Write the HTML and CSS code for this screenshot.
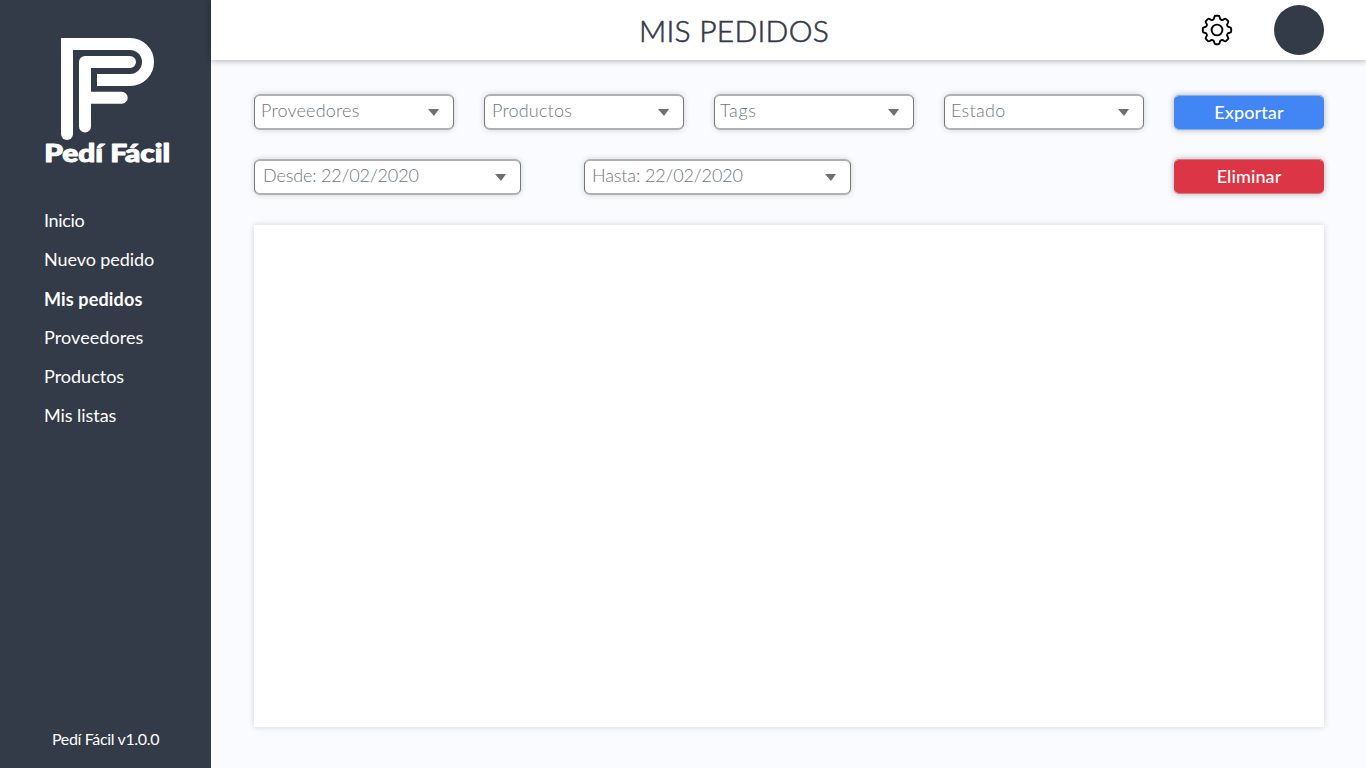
FILE: index.html
```html
<!DOCTYPE html>
<html lang="es">
<head>
<meta charset="utf-8">
<title>Pedí Fácil</title>
<link rel="stylesheet" href="styles.css">
</head>
<body>
<div class="app">
  <aside class="sidebar">
    <svg class="logo" width="130" height="134" viewBox="42 34 130 134">
      <g fill="none" stroke="#fff" stroke-width="12">
        <path d="M67 134V46" stroke-linecap="round"/>
        <path d="M67 56V44H130A18 18 0 0 1 130 80H97"/>
        <path d="M85 126.500V62H130M85 97.700H121.700" stroke-linecap="round" stroke-linejoin="round"/>
      </g>
      <text class="logo-text" x="44.200" y="162" textLength="126" lengthAdjust="spacingAndGlyphs">Pedí Fácil</text>
    </svg>
    <nav class="menu">
      <a class="m1">Inicio</a>
      <a class="m2">Nuevo pedido</a>
      <a class="m3 active">Mis pedidos</a>
      <a class="m4">Proveedores</a>
      <a class="m5">Productos</a>
      <a class="m6">Mis listas</a>
    </nav>
    <footer class="version">Pedí Fácil v1.0.0</footer>
  </aside>
  <div class="main">
    <header class="topbar">
      <h1>MIS PEDIDOS</h1>
      <svg class="gear" width="32" height="32" viewBox="-16 -16 32 32" fill="none" stroke="#000" stroke-width="1.900" stroke-linejoin="round">
        <circle r="5.400"/>
        <path d="M-1.200 -14.200H1.200Q2.600 -14.200 2.700 -12.600Q2.800 -10.900 4.300 -10.200Q5.600 -9.700 6.900 -10.800Q8.300 -11.900 9.200 -10.900L10.900 -9.200Q11.900 -8.300 10.800 -6.900Q9.700 -5.600 10.200 -4.300Q10.900 -2.800 12.600 -2.700Q14.200 -2.600 14.200 -1.200V1.200Q14.200 2.600 12.600 2.700Q10.900 2.800 10.200 4.300Q9.700 5.600 10.800 6.900Q11.900 8.300 10.900 9.200L9.200 10.900Q8.300 11.900 6.900 10.800Q5.600 9.700 4.300 10.200Q2.800 10.900 2.700 12.600Q2.600 14.200 1.200 14.200H-1.200Q-2.600 14.200 -2.700 12.600Q-2.800 10.900 -4.300 10.200Q-5.600 9.700 -6.900 10.800Q-8.300 11.900 -9.200 10.900L-10.900 9.200Q-11.900 8.300 -10.800 6.900Q-9.700 5.600 -10.200 4.300Q-10.900 2.800 -12.600 2.700Q-14.200 2.600 -14.200 1.200V-1.200Q-14.200 -2.600 -12.600 -2.700Q-10.900 -2.800 -10.200 -4.300Q-9.700 -5.600 -10.800 -6.900Q-11.900 -8.300 -10.900 -9.200L-9.200 -10.900Q-8.300 -11.900 -6.900 -10.800Q-5.600 -9.700 -4.300 -10.200Q-2.800 -10.900 -2.700 -12.600Q-2.600 -14.200 -1.200 -14.200Z"/>
      </svg>
      <div class="avatar"></div>
    </header>
    <main class="content">
      <div class="filters">
        <div class="select"><span class="f1">Proveedores</span><i class="arrow"></i></div>
        <div class="select"><span class="f2">Productos</span><i class="arrow"></i></div>
        <div class="select"><span class="f3">Tags</span><i class="arrow"></i></div>
        <div class="select"><span class="f4">Estado</span><i class="arrow"></i></div>
        <button class="btn export">Exportar</button>
      </div>
      <div class="filters dates">
        <div class="select wide"><span class="f5">Desde: 22/02/2020</span><i class="arrow"></i></div>
        <div class="select wide"><span class="f6">Hasta: 22/02/2020</span><i class="arrow"></i></div>
        <button class="btn delete">Eliminar</button>
      </div>
      <section class="panel"></section>
    </main>
  </div>
</div>
</body>
</html>
```
FILE: styles.css
```css
* { box-sizing: border-box; }
body { margin: 0; font-family: Lato, "Noto Sans", sans-serif; font-size: 18px; }
.app { display: flex; width: 1366px; height: 768px; overflow: hidden; background: #fafbff; }
.sidebar { width: 211px; background: #333a48; color: #fff; display: flex; flex-direction: column; padding: 34px 0 0 42px; }
.logo { display: block; }
.logo-text { font-size: 25px; font-weight: 900; fill: #fff; stroke: #fff; stroke-width: 1px; stroke-linejoin: round; }
.menu { display: flex; flex-direction: column; padding: 33px 0 0 2px; }
.menu a { height: 39px; line-height: 39px; white-space: nowrap; }
.menu .m1 { letter-spacing: -.35px; }
.menu .m2 { letter-spacing: -.08px; }
.menu .m4 { letter-spacing: .08px; }
.menu .m6 { letter-spacing: -.05px; }
.menu .active { font-weight: 700; letter-spacing: .15px; padding-top: 1px; line-height: 38px; }
.version { margin: auto 0 18px 10px; font-size: 16px; line-height: 22px; letter-spacing: -.35px; white-space: nowrap; }
.main { flex: 1; display: flex; flex-direction: column; }
.topbar { height: 60px; background: #fff; box-shadow: 0 1px 6px rgba(0,0,0,.3); display: flex; align-items: center; padding-right: 42px; position: relative; }
.topbar h1 { margin: 0 0 0 428px; width: 200px; font-size: 30px; line-height: 40px; font-weight: 300; letter-spacing: .25px; color: #333a48; -webkit-text-stroke: .6px #333a48; white-space: nowrap; }
.gear { margin-left: auto; }
.avatar { width: 50px; height: 50px; margin-left: 41px; border-radius: 50%; background: #333a48; }
.content { padding: 34px 42px 0 43px; }
.filters { display: flex; gap: 30px; height: 36px; }
.dates { margin-top: 29px; gap: 63px; }
.select { width: 200px; height: 36px; border: solid #777; border-width: 2px 1px; border-top-color: #b0b0b0; border-bottom-color: #b0b0b0; border-radius: 6px; background: #fff; box-shadow: 0 0 6px rgba(0,0,0,.16); display: flex; align-items: center; justify-content: space-between; padding: 0 14px 0 6px; color: #707781; font-weight: 300; }
.wide { width: 267px; }
.select span { line-height: 30px; margin-top: -4px; white-space: nowrap; }
.f1 { letter-spacing: .2px; }
.f2 { padding-left: 1px; letter-spacing: .2px; }
.select .f3 { margin-left: -1px; letter-spacing: .7px; }
.f4 { letter-spacing: .3px; }
.f5 { padding-left: 2px; letter-spacing: -.15px; }
.f6 { padding-left: 1px; letter-spacing: -.12px; }
.arrow { width: 11px; border: solid transparent; border-width: 7px 5px 0 6px; border-top-color: #707070; }
.btn { width: 150px; height: 35px; margin: 1px 0 0; padding: 0; border: 0 solid; border-width: 1px 0; border-radius: 5px; color: #fff; font: 500 18px/33px Lato, "Noto Sans", sans-serif; letter-spacing: .1px; background-clip: padding-box; box-shadow: 0 0 6px rgba(0,0,0,.3); }
.export { background-color: #4285f4; border-color: #87aee8; }
.delete { background-color: #dc3545; border-color: #d87881; margin: 0 0 0 auto; }
.panel { margin-top: 30px; height: 502px; background: #fff; box-shadow: 0 0 6px rgba(0,0,0,.16); }
```
